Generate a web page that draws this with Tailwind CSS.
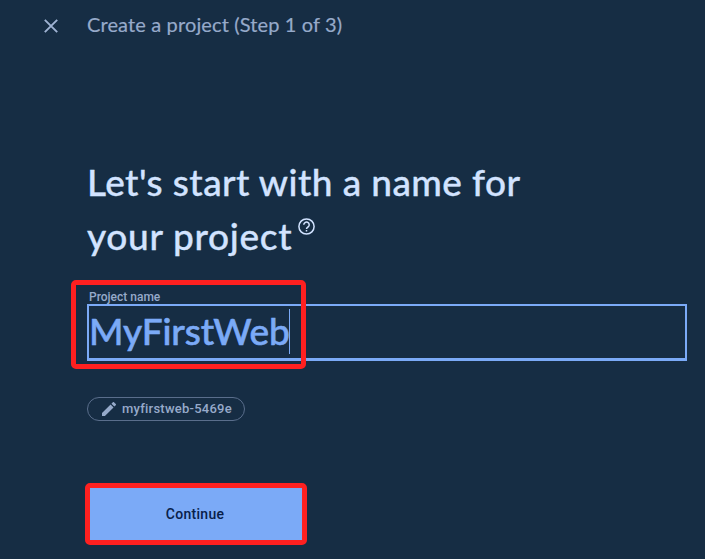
<!DOCTYPE html>
<html lang="en">
<head>
<meta charset="utf-8">
<title>Create a project</title>
<script src="https://cdn.jsdelivr.net/npm/@tailwindcss/browser@4"></script>
</head>
<body class="h-[559px] w-[705px] overflow-hidden bg-[#162d44] font-['Roboto',sans-serif]">
<header class="flex h-[52px] items-center pl-[44px]">
  <svg class="h-[14px] w-[14px]" viewBox="0 0 14 14" fill="none" stroke="#9fb3d3" stroke-width="1.9"><path d="M.8.8 13.2 13.2M13.2.8.8 13.2"/></svg>
  <span class="ml-[29px] -mt-[4px] whitespace-nowrap font-['Lato',sans-serif] text-[20px] leading-[50px] tracking-[0.13px] text-[#96aaca] [-webkit-text-stroke:0.2px_#96aaca]">Create a project (Step 1 of 3)</span>
</header>
<main class="pl-[87px] pt-[103px]">
  <h1 class="font-['Lato',sans-serif] text-[37px] font-medium leading-[54px] tracking-[0.42px] text-[#d2e3ff] [-webkit-text-stroke:0.35px_#d2e3ff]">
    <span class="block whitespace-nowrap">Let's start with a name for</span>
    <span class="flex whitespace-nowrap"><span class="w-[211px] tracking-[0.7px]">your project</span><svg class="mt-[9px] h-[17px] w-[17px]" viewBox="0 0 17 17" fill="none" stroke="#d2e3ff" stroke-width="1.5"><circle cx="8.5" cy="8.5" r="7.6"/><path d="M5.8 6.8a2.7 2.7 0 1 1 4.6 1.9C9.2 9.7 8.5 9.8 8.5 11"/><path d="M8.5 12v1.5"/></svg></span>
  </h1>
  <div class="relative mt-[27px] w-[600px]">
    <label class="block h-[14px] pl-[2px] text-[12px] font-medium leading-[14px] text-[#96aaca]" for="n">Project name</label>
    <div id="n" class="flex h-[57px] border-2 border-b-[3px] border-[#7baaf7]">
      <span class="w-[200px] whitespace-nowrap font-['Lato',sans-serif] text-[37px] font-medium leading-[50px] text-[#7baaf7] tracking-[-0.1px] [-webkit-text-stroke:0.6px_#7baaf7]">MyFirstWeb</span><span class="mt-[3px] h-[45px] w-px bg-[#7baaf7]"></span>
    </div>
    <div class="absolute -left-[16px] -top-[10px] h-[89px] w-[235px] rounded-[5px] border-5 border-[#ff2020]"></div>
  </div>
  <div class="mt-[36px] flex h-[24px] w-[158px] items-center rounded-full border border-[#5a6e8c] pl-[14px] text-[#96aaca]">
    <svg class="h-[14px] w-[14px]" viewBox="3 3 18 18" fill="currentColor"><path d="M3 17.25V21h3.75L17.81 9.94l-3.75-3.75L3 17.25zM20.71 7.04a1 1 0 0 0 0-1.41l-2.34-2.34a1 1 0 0 0-1.41 0l-1.83 1.83 3.75 3.75 1.83-1.83z"/></svg>
    <span class="ml-[6px] whitespace-nowrap text-[13px] font-medium tracking-[0.23px]">myfirstweb-5469e</span>
  </div>
  <div class="relative mt-[66px] h-[54px] w-[216px]">
    <button class="block h-full w-full rounded-[4px] bg-[#7baaf7] text-[14px] font-medium tracking-[0.3px] text-[#08204a]">Continue</button>
    <div class="absolute -left-[2px] -top-[4px] h-[62px] w-[222px] rounded-[5px] border-5 border-[#ff2020]"></div>
  </div>
</main>
</body>
</html>
